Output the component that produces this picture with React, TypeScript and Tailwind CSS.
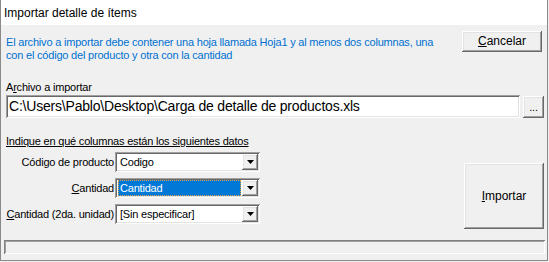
import React from "react";

const raised =
  "shadow-[inset_-1px_-1px_#696969,inset_1px_1px_#ffffff,inset_-2px_-2px_#a0a0a0,inset_2px_2px_#e3e3e3]";
const sunken =
  "shadow-[inset_1px_1px_#a0a0a0,inset_-1px_-1px_#ffffff,inset_2px_2px_#696969,inset_-2px_-2px_#e3e3e3]";

function Combo({ value, selected }: { value: string; selected?: boolean }) {
  return (
    <div className={`flex h-[20px] w-[145px] bg-white p-[2px] ${sunken}`}>
      <div className="flex flex-1 items-center pl-[1px] pr-[1px]">
        <div
          className={
            selected
              ? "flex h-[16px] flex-1 items-center border border-dotted border-[#e8a33c] bg-[#0078d7] pl-[1px] text-white"
              : "flex h-[16px] flex-1 items-center pl-[2px] text-black"
          }
        >
          {value}
        </div>
      </div>
      <div className={`flex w-[16px] items-center justify-center bg-[#f0f0f0] ${raised}`}>
        <svg width="7" height="4" viewBox="0 0 7 4">
          <path d="M0 0h7L3.5 4z" fill="#000" />
        </svg>
      </div>
    </div>
  );
}

export default function App() {
  return (
    <div className="h-[262px] w-[549px] bg-[#f0f0f0] font-['Liberation_Sans',Arial,sans-serif]">
      <div className="flex h-[261px] w-[548px] flex-col border-r border-b border-l border-[#8a8a8a]">
        {/* title bar */}
        <div className="flex h-[25px] items-center bg-white pl-[3px] text-[12px] text-black">
          Importar detalle de ítems
        </div>

        <div className="flex flex-1 flex-col bg-[#f0f0f0] pl-[5px] text-[11px] leading-[13px] tracking-[-0.2px] text-black">
          <div className="flex items-start">
            <div className="mt-[11px] w-[440px] text-[#0070d0]">
              El archivo a importar debe contener una hoja llamada Hoja1 y al menos dos columnas, una
              con el código del producto y otra con la cantidad
            </div>
            <button
              className={`ml-auto mr-[5px] mt-[6px] h-[21px] w-[80px] bg-[#f0f0f0] text-[12px] tracking-normal ${raised}`}
            >
              <u>C</u>ancelar
            </button>
          </div>

          <div className="mt-[19px]">
            A<u>r</u>chivo a importar
          </div>

          <div className="mt-[1px] flex items-start">
            <div
              className={`flex h-[23px] w-[514px] items-center whitespace-nowrap bg-white pl-[3px] text-[14px] tracking-[-0.2px] ${sunken}`}
            >
              C:\Users\Pablo\Desktop\Carga de detalle de productos.xls
            </div>
            <button
              className={`ml-[3px] mt-[1px] flex h-[22px] w-[21px] items-end justify-center pb-[5px] text-[11px] leading-none ${raised}`}
            >
              ...
            </button>
          </div>

          <div className="mt-[17px] underline">Indique en qué columnas están los siguientes datos</div>

          <div className="mt-[4px] flex items-start">
            <div className="grid grid-cols-[109px_145px] items-center gap-y-[6px]">
              <div className="whitespace-nowrap pr-[1px] text-right">Código de producto</div>
              <Combo value="Codigo" />
              <div className="whitespace-nowrap pr-[1px] text-right">
                <u>C</u>antidad
              </div>
              <Combo value="Cantidad" selected />
              <div className="whitespace-nowrap pr-[1px] text-right">
                <u>C</u>antidad (2da. unidad)
              </div>
              <Combo value="[Sin especificar]" />
            </div>
            <button
              className={`ml-auto mr-[3px] mt-[11px] h-[66px] w-[80px] bg-[#f0f0f0] text-[12px] tracking-normal ${raised}`}
            >
              <u>I</u>mportar
            </button>
          </div>

          <div className="mr-[2px] ml-[-2px] mt-[11px] h-[14px] shadow-[inset_1px_1px_#808080,inset_-1px_-1px_#ffffff,inset_2px_2px_#a0a0a0]" />
        </div>
      </div>
    </div>
  );
}
